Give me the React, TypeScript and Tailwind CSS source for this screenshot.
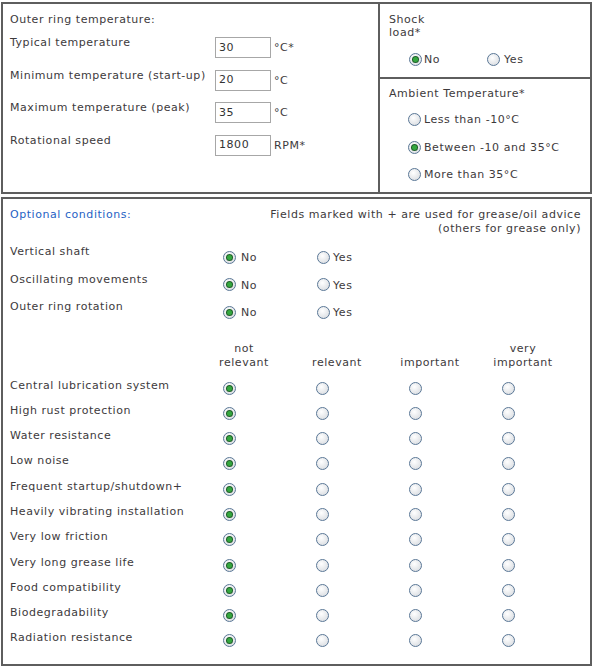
import React from "react";

const font = { fontFamily: '"DejaVu Sans", Verdana, sans-serif' };

const Radio = ({ checked = false }: { checked?: boolean }) => (
  <span className="relative inline-flex h-[13px] w-[13px] shrink-0 items-center justify-center rounded-full border border-[#5a7796] bg-[radial-gradient(circle_at_40%_35%,#ffffff,#d3d7dc)]">
    {checked && (
      <span className="h-[5px] w-[5px] rounded-full bg-[#35a83f] shadow-[0_0_0_1px_#1f5e2a]" />
    )}
  </span>
);

const temps = [
  { label: "Typical temperature", value: "30", unit: "°C*" },
  { label: "Minimum temperature (start-up)", value: "20", unit: "°C" },
  { label: "Maximum temperature (peak)", value: "35", unit: "°C" },
  { label: "Rotational speed", value: "1800", unit: "RPM*" },
];

const ambient = [
  { label: "Less than -10°C", checked: false },
  { label: "Between -10 and 35°C", checked: true },
  { label: "More than 35°C", checked: false },
];

const yesNo = ["Vertical shaft", "Oscillating movements", "Outer ring rotation"];

const conditions = [
  "Central lubrication system",
  "High rust protection",
  "Water resistance",
  "Low noise",
  "Frequent startup/shutdown+",
  "Heavily vibrating installation",
  "Very low friction",
  "Very long grease life",
  "Food compatibility",
  "Biodegradability",
  "Radiation resistance",
];

const levels = [
  ["not", "relevant"],
  ["", "relevant"],
  ["", "important"],
  ["very", "important"],
];

export default function App() {
  return (
    <div
      className="w-[595px] bg-white pl-px pt-[2px] text-[11px] leading-[14px] tracking-[0.55px] text-[#3d3a3c]"
      style={font}
    >
      {/* operating conditions */}
      <div className="flex h-[192px] w-[591px] border-2 border-[#5e5e5e]">
        <div className="w-[377px] border-r-2 border-[#5e5e5e] pl-[7px] pt-[9px]">
          <div>Outer ring temperature:</div>
          <div className="mt-[9px]">
            {temps.map((t) => (
              <div key={t.label} className="flex h-[32.5px] items-start">
                <div className="w-[205px]">{t.label}</div>
                <div className="mt-[1px] flex items-center">
                  <div className="flex h-[21px] w-[56px] items-center border border-[#a7a7a7] pl-[3px] text-[#333]">
                    {t.value}
                  </div>
                  <span className="ml-[3px] pt-[1px]">{t.unit}</span>
                </div>
              </div>
            ))}
          </div>
        </div>

        <div className="flex flex-1 flex-col">
          <div className="h-[75px] border-b-2 border-[#5e5e5e] pl-[9px] pt-[9px]">
            <div className="leading-[13px]">
              Shock
              <br />
              load*
            </div>
            <div className="mt-[12px] flex items-center pl-[20px]">
              <Radio checked />
              <span className="ml-[2px] mt-[2px] w-[63px]">No</span>
              <Radio />
              <span className="ml-[4px] mt-[2px]">Yes</span>
            </div>
          </div>
          <div className="pl-[9px] pt-[8px]">
            <div>Ambient Temperature*</div>
            <div className="mt-[5px] pl-[19px]">
              {ambient.map((a) => (
                <div key={a.label} className="flex h-[27.5px] items-center">
                  <Radio checked={a.checked} />
                  <span className="ml-[3px] mt-[1px]">{a.label}</span>
                </div>
              ))}
            </div>
          </div>
        </div>
      </div>

      {/* optional conditions */}
      <div className="mt-[3px] h-[469px] w-[591px] border-2 border-[#5e5e5e] pl-[7px] pr-[9px] pt-[9px]">
        <div className="flex justify-between">
          <div className="text-[#1f62c4]">Optional conditions:</div>
          <div className="text-right">
            Fields marked with + are used for grease/oil advice
            <br />
            (others for grease only)
          </div>
        </div>

        <div className="mt-[9px]">
          {yesNo.map((l) => (
            <div key={l} className="grid h-[27.5px] grid-cols-[213px_94px_1fr]">
              <div>{l}</div>
              <div className="mt-[4px] flex items-center self-start">
                <Radio checked />
                <span className="ml-[5px] mt-[2px]">No</span>
              </div>
              <div className="mt-[4px] flex items-center self-start">
                <Radio />
                <span className="ml-[3px] mt-[2px]">Yes</span>
              </div>
            </div>
          ))}
        </div>

        <div className="mt-[14px] grid grid-cols-[213px_93px_93px_93px_1fr]">
          <div />
          {levels.map((lv, i) => (
            <div key={i} className="-ml-[13px] w-[68px] text-center">
              {lv[0] || "\u00a0"}
              <br />
              {lv[1]}
            </div>
          ))}
        </div>

        <div className="mt-[9px]">
          {conditions.map((c) => (
            <div
              key={c}
              className="grid h-[25.3px] grid-cols-[213px_93px_93px_93px_1fr]"
            >
              <div>{c}</div>
              {[0, 1, 2, 3].map((i) => (
                <div key={i} className="mt-[3px] flex">
                  <Radio checked={i === 0} />
                </div>
              ))}
            </div>
          ))}
        </div>
      </div>
    </div>
  );
}
